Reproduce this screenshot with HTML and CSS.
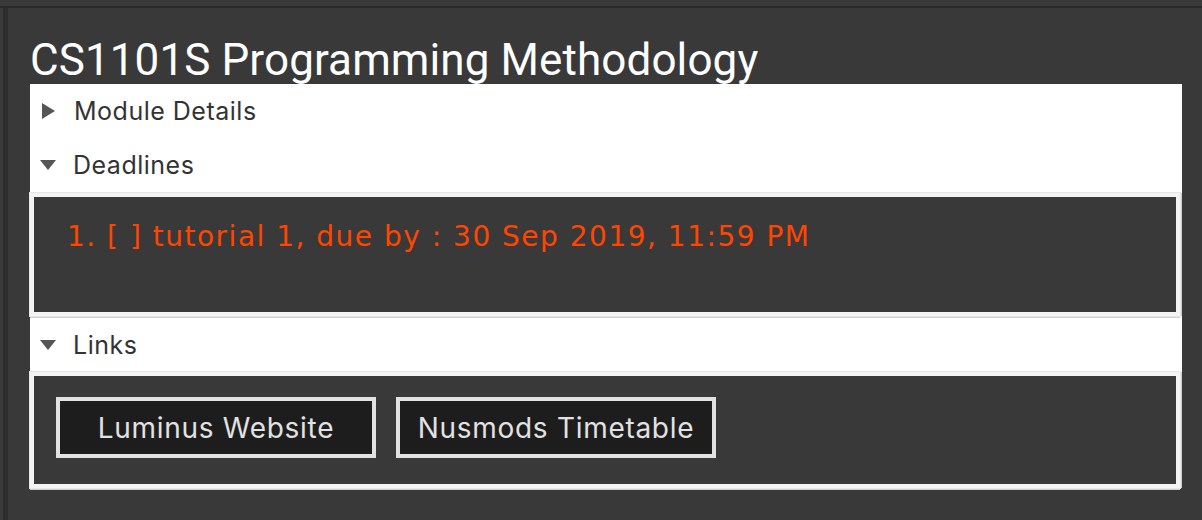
FILE: index.html
```html
<!DOCTYPE html>
<html>
<head>
<meta charset="utf-8">
<link rel="stylesheet" href="styles.css">
</head>
<body>
<div class="topbar"></div>
<div class="frame">
  <div class="edge"></div>
  <main class="content">
    <h1 class="title">CS1101S Programming Methodology</h1>
    <section class="panel">
      <div class="header"><span class="tri tri-right"></span><span>Module Details</span></div>
      <div class="header"><span class="tri tri-down"></span><span>Deadlines</span></div>
      <div class="box deadlines">
        <div class="deadline">1. [ ] tutorial 1, due by : 30 Sep 2019, 11:59 PM</div>
      </div>
      <div class="header"><span class="tri tri-down"></span><span>Links</span></div>
      <div class="box links">
        <button class="btn">Luminus Website</button>
        <button class="btn">Nusmods Timetable</button>
      </div>
    </section>
  </main>
</div>
</body>
</html>
```

FILE: styles.css
```css
html, body {
  margin: 0;
  padding: 0;
  background: #393939;
  height: 520px;
  overflow: hidden;
  font-family: Roboto, "Liberation Sans", sans-serif;
}
.topbar {
  height: 6px;
  background: #3a3a3a;
  border-bottom: 2px solid #2b2b2b;
}
.frame {
  display: flex;
  height: 512px;
}
.edge {
  width: 5px;
  border-left: 3px solid #3a3a3a;
  background: #2d2d2d;
}
.content {
  flex: 1;
  padding: 0 20px 0 22px;
}
.title {
  margin: 0;
  height: 76px;
  box-sizing: border-box;
  padding-top: 26px;
  font-size: 44px;
  font-weight: 400;
  line-height: 52px;
  color: #ffffff;
  padding-left: 0;
  letter-spacing: 0.1px;
}
.panel {
  background: #ffffff;
}
.header {
  display: flex;
  align-items: center;
  height: 54px;
  font-family: Inter, Roboto, sans-serif;
  font-size: 25px;
  letter-spacing: 0.5px;
  color: #333333;
  padding-left: 10px;
}
.tri {
  display: inline-block;
  width: 0;
  height: 0;
  margin-right: 17px;
}
.tri-right {
  border-top: 8px solid transparent;
  border-bottom: 8px solid transparent;
  border-left: 13px solid #555555;
  margin-left: 2px;
  margin-right: 19px;
}
.tri-down {
  border-left: 8.5px solid transparent;
  border-right: 8.5px solid transparent;
  border-top: 10px solid #555555;
}
.box {
  background: #393939;
  border: 4px solid #f4f4f4;
  box-shadow: 0 2px 0 #cfcfcf, 2px 0 0 #cfcfcf;
  outline: 1px solid #e6e6e6;
  margin-right: 2px;
  margin-bottom: 2px;
}
.deadlines {
  height: 115px;
  margin-top: 1px;
}
.deadline {
  color: #ff4500;
  font-family: "DejaVu Sans", Verdana, sans-serif;
  font-size: 28px;
  letter-spacing: 1.5px;
  padding: 23px 0 0 33px;
}
.links {
  display: flex;
  align-items: flex-start;
  gap: 20px;
  padding: 21px 0 0 22px;
  box-sizing: border-box;
  height: 116px;
}
.btn {
  width: 320px;
  height: 61px;
  background: #1d1d1d;
  border: 4px solid #e2e2e2;
  color: #e2e2e2;
  font-family: Inter, Roboto, sans-serif;
  font-size: 28px;
  letter-spacing: 0.7px;
  padding: 0;
}
```
